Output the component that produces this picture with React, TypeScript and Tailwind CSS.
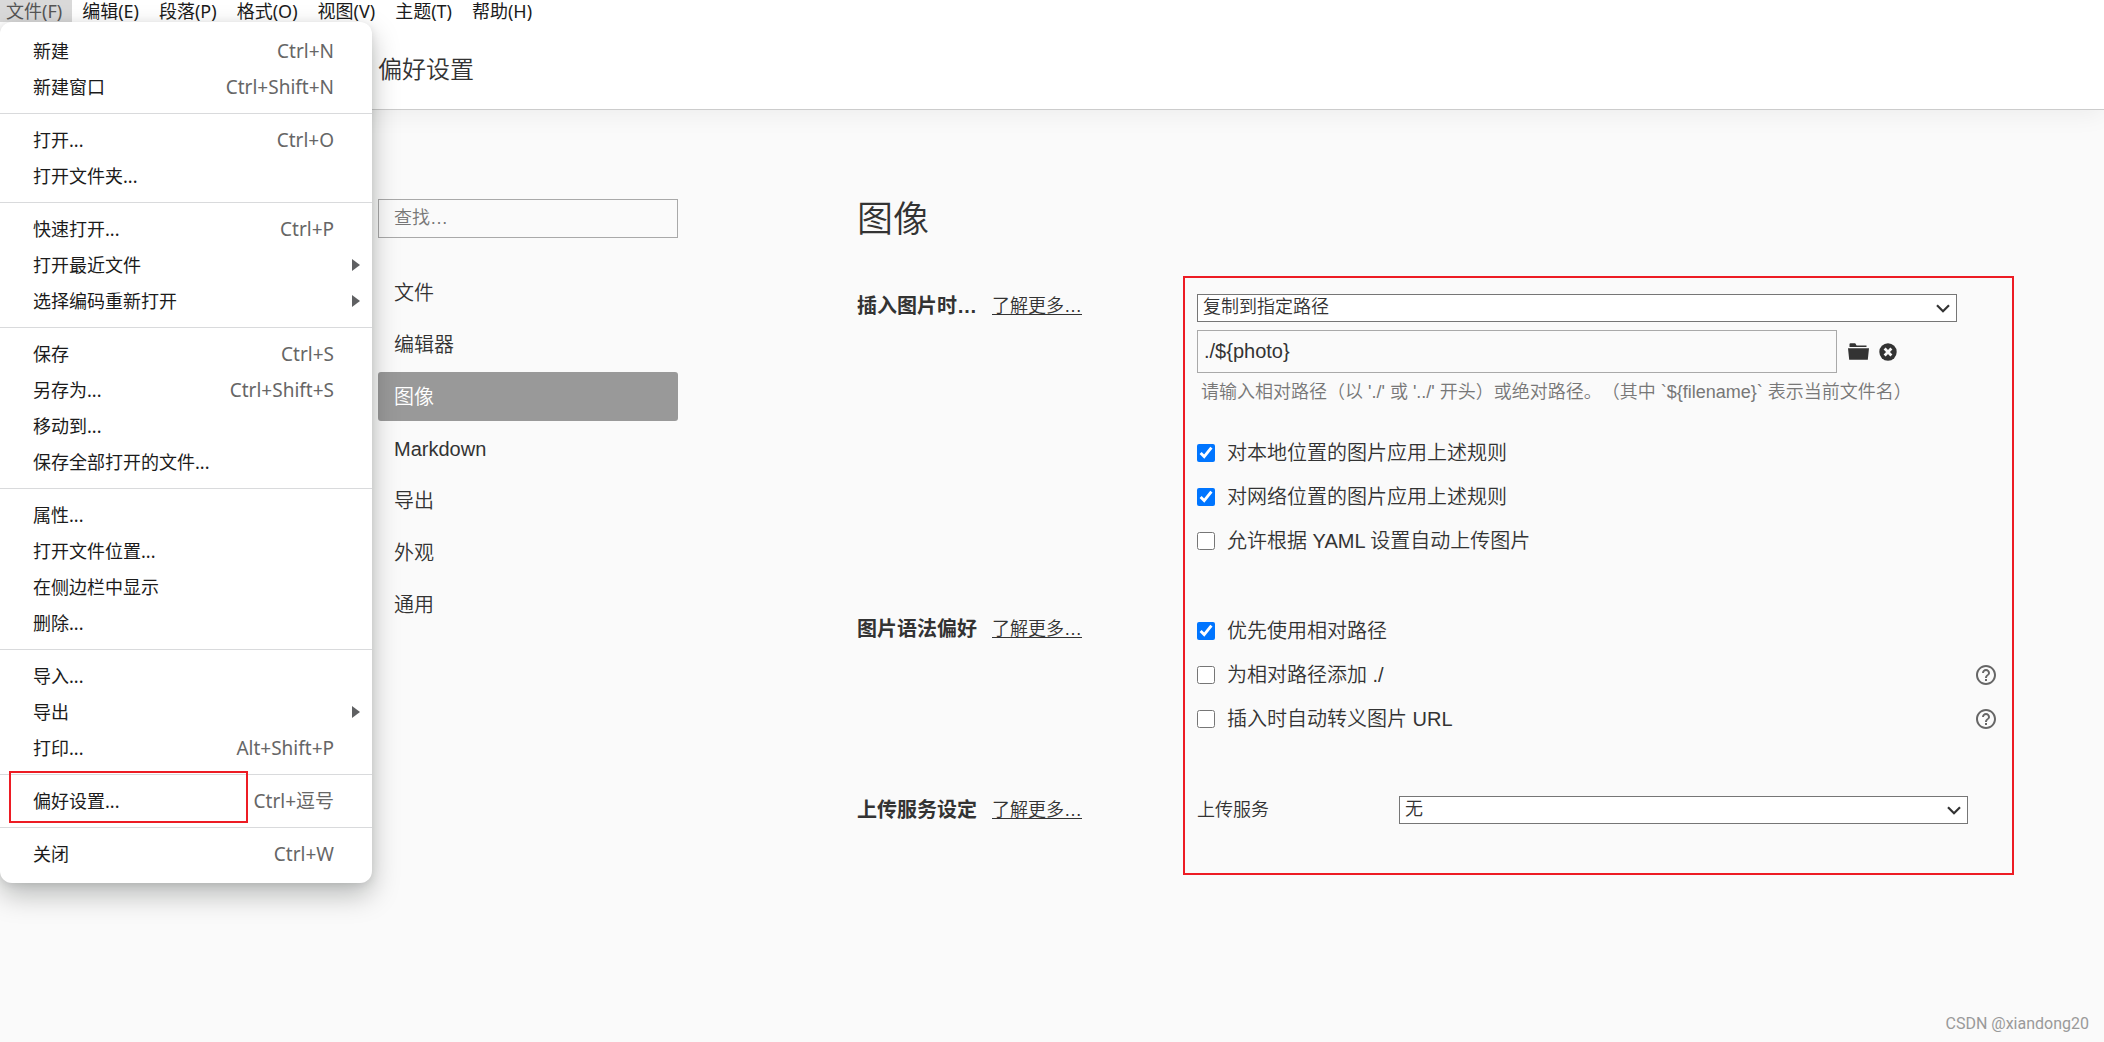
import { useState } from "react";
import type { ReactNode } from "react";
import { MdHelpOutline } from "react-icons/md";

/** ==============================
 *  Types
 *  ============================== */
interface MenuItem {
  label: string;
  shortcut?: string;
  submenu?: boolean;
  marked?: boolean;
}

/** ==============================
 *  Data
 *  ============================== */
const MENU_BAR = [
  "文件(F)",
  "编辑(E)",
  "段落(P)",
  "格式(O)",
  "视图(V)",
  "主题(T)",
  "帮助(H)",
];

const FILE_MENU: MenuItem[][] = [
  [
    { label: "新建", shortcut: "Ctrl+N" },
    { label: "新建窗口", shortcut: "Ctrl+Shift+N" },
  ],
  [{ label: "打开...", shortcut: "Ctrl+O" }, { label: "打开文件夹..." }],
  [
    { label: "快速打开...", shortcut: "Ctrl+P" },
    { label: "打开最近文件", submenu: true },
    { label: "选择编码重新打开", submenu: true },
  ],
  [
    { label: "保存", shortcut: "Ctrl+S" },
    { label: "另存为...", shortcut: "Ctrl+Shift+S" },
    { label: "移动到..." },
    { label: "保存全部打开的文件..." },
  ],
  [
    { label: "属性..." },
    { label: "打开文件位置..." },
    { label: "在侧边栏中显示" },
    { label: "删除..." },
  ],
  [
    { label: "导入..." },
    { label: "导出", submenu: true },
    { label: "打印...", shortcut: "Alt+Shift+P" },
  ],
  [{ label: "偏好设置...", shortcut: "Ctrl+逗号", marked: true }],
  [{ label: "关闭", shortcut: "Ctrl+W" }],
];

const TABS = ["文件", "编辑器", "图像", "Markdown", "导出", "外观", "通用"];

const FileMenu = () => (
  <div className="absolute left-0 top-[22px] z-20 w-[372px] rounded-xl bg-white py-[11px] font-['Noto_Sans','Noto_Sans_CJK_SC',sans-serif] font-normal shadow-[0_12px_28px_rgba(0,10,8,0.26),0_2px_10px_rgba(0,10,8,0.1)]">
    {FILE_MENU.map((group, i) => (
      <ul
        key={i}
        className="border-[#d9dadc] py-2 not-first:border-t first:pt-0 last:pb-0"
      >
        {group.map((item) => (
          <li key={item.label} className="relative">
            <button
              type="button"
              className="flex h-9 w-full items-center justify-between pl-[33px] pr-[38px] text-[18px] text-[#1b1b1b]"
            >
              <span>{item.label}</span>
              {item.shortcut && (
                <span className="text-[19px] text-[#666]">{item.shortcut}</span>
              )}
            </button>
            {item.submenu && (
              <svg
                viewBox="0 0 8 12"
                className="absolute right-3 top-3 h-3 w-2 fill-[#5f6062]"
              >
                <path d="M0 0 8 6 0 12Z" />
              </svg>
            )}
            {item.marked && (
              <span className="pointer-events-none absolute -top-3 left-[9px] h-[52px] w-[239px] border-2 border-[#ed1c24]" />
            )}
          </li>
        ))}
      </ul>
    ))}
  </div>
);

const Chevron = () => (
  <svg
    viewBox="0 0 14 9"
    className="pointer-events-none absolute right-[7px] top-[10px] h-[9px] w-[14px] fill-none stroke-[#333]"
    strokeWidth="2.2"
  >
    <path d="M1 1.2 7 7.2 13 1.2" />
  </svg>
);

const Select = ({
  id,
  value,
  label,
}: {
  id: string;
  value: string;
  label?: string;
}) => (
  <div className="relative">
    <select
      id={id}
      aria-label={label}
      className="block h-7 w-full appearance-none border border-[#767676] bg-white pb-[2px] pl-[5px] text-[18px] leading-6"
    >
      <option>{value}</option>
    </select>
    <Chevron />
  </div>
);

const Check = ({
  label,
  checked,
  help,
}: {
  label: string;
  checked?: boolean;
  help?: boolean;
}) => (
  <div className="flex h-11 items-center justify-between">
    <label className="flex items-center gap-3">
      <input
        type="checkbox"
        defaultChecked={checked}
        className="size-[18px] accent-[#0075ff]"
      />
      {label}
    </label>
    {help && (
      <button type="button" aria-label="帮助" className="-mr-[2px] text-[#666]">
        <MdHelpOutline className="size-6" />
      </button>
    )}
  </div>
);

const Section = ({
  title,
  labelHeight,
  children,
}: {
  title: string;
  labelHeight: string;
  children: ReactNode;
}) => (
  <section className="flex items-start">
    <div className={`flex w-[340px] shrink-0 items-center ${labelHeight}`}>
      <h3 className="w-[135px] font-bold">{title}</h3>
      <a href="#more" className="text-[18px] underline underline-offset-2">
        了解更多…
      </a>
    </div>
    <div className="min-w-0 flex-1">{children}</div>
  </section>
);

const App = () => {
  const [tab, setTab] = useState("图像");

  return (
    <div className="relative flex min-h-screen flex-col overflow-hidden bg-[#fafafa] font-['Liberation_Sans','Noto_Sans_CJK_SC',sans-serif] text-[20px] font-[350] text-[#333]">
      {/* Menu bar */}
      <nav className="relative z-20 -ml-1 flex h-[22px] bg-white font-['Noto_Sans','Noto_Sans_CJK_SC',sans-serif] font-normal">
        {MENU_BAR.map((m, i) => (
          <button
            key={m}
            type="button"
            className={`px-[10px] text-[18px] leading-[22px] ${i === 0 ? "bg-[#d9d9d9] text-[#555]" : "text-[#1b1b1b]"}`}
          >
            {m}
          </button>
        ))}
      </nav>
      <FileMenu />

      {/* Header */}
      <header className="flex h-[88px] items-center border-b border-[#ccc] bg-white pl-[378px] pt-2 shadow-[0_4px_24px_rgba(0,0,0,0.06)]">
        <h1 className="text-[24px]">偏好设置</h1>
      </header>

      <div className="flex flex-1 pl-[378px] pr-[90px] pt-[89px]">
        {/* Sidebar */}
        <aside className="w-[300px] shrink-0">
          <input
            type="search"
            placeholder="查找…"
            aria-label="查找"
            className="block h-[39px] w-full border border-[#a9a9a9] px-[15px] text-[18px] placeholder:text-[#777]"
          />
          <ul className="mt-[30px] flex flex-col gap-[3px]">
            {TABS.map((t) => (
              <li key={t}>
                <button
                  type="button"
                  onClick={() => setTab(t)}
                  className={`h-[49px] w-full rounded-[3px] px-4 text-left ${t === tab ? "bg-[#999] text-white" : ""}`}
                >
                  {t}
                </button>
              </li>
            ))}
          </ul>
        </aside>

        {/* Image settings */}
        <main className="ml-[179px] min-w-0 flex-1">
          <h2 className="pt-[1px] text-[36px] leading-[40px]">图像</h2>

          <div className="relative mt-9 pb-[51px] pr-[18px] pt-[18px]">
            <Section title="插入图片时…" labelHeight="h-6">
              <div className="mr-[39px]">
                <Select
                  id="insert-action"
                  label="插入图片时"
                  value="复制到指定路径"
                />
              </div>
              <div className="mr-[99px] mt-2 flex items-center">
                <input
                  type="text"
                  defaultValue="./${photo}"
                  aria-label="路径"
                  className="h-[43px] min-w-0 flex-1 border border-[#a9a9a9] px-[6px]"
                />
                <button
                  type="button"
                  aria-label="打开文件夹"
                  className="ml-[11px]"
                >
                  <svg
                    viewBox="0 0 21 17"
                    className="h-[17px] w-[21px] fill-[#333]"
                  >
                    <path d="M1.500 1Q1.700 .3 2.400 .3H7.200L8.600 2.400H18.500V4H1.500ZM0 5.300H21L19.800 16.700H1.200Z" />
                  </svg>
                </button>
                <button type="button" aria-label="清除" className="ml-[10px]">
                  <svg viewBox="0 0 18 18" className="size-[18px]">
                    <circle cx="9" cy="9" r="8.700" fill="#333" />
                    <path
                      d="M5.600 5.600 12.400 12.400M12.400 5.600 5.600 12.400"
                      stroke="#fafafa"
                      strokeWidth="2.800"
                    />
                  </svg>
                </button>
              </div>
              <p className="ml-1 mt-1 h-[30px] whitespace-nowrap text-[18px] leading-[30px] text-[#777] [text-spacing-trim:space-all]">
                请输入相对路径（以 './' 或 '../' 开头）或绝对路径。（其中
                `${"{filename}"}` 表示当前文件名）
              </p>
              <div className="mt-6">
                <Check label="对本地位置的图片应用上述规则" checked />
                <Check label="对网络位置的图片应用上述规则" checked />
                <Check label="允许根据 YAML 设置自动上传图片" />
              </div>
            </Section>

            <div className="mt-[46px]">
              <Section title="图片语法偏好" labelHeight="h-10">
                <Check label="优先使用相对路径" checked />
                <Check label="为相对路径添加 ./" help />
                <Check label="插入时自动转义图片 URL" help />
              </Section>
            </div>

            <div className="mt-[55px]">
              <Section title="上传服务设定" labelHeight="h-7">
                <div className="mr-[28px] flex items-center">
                  <label
                    htmlFor="upload-service"
                    className="w-[202px] text-[18px]"
                  >
                    上传服务
                  </label>
                  <div className="flex-1">
                    <Select id="upload-service" value="无" />
                  </div>
                </div>
              </Section>
            </div>

            {/* Highlight frame */}
            <div className="pointer-events-none absolute inset-y-0 left-[326px] right-0 border-2 border-[#ed1c24]" />
          </div>
        </main>
      </div>

      <p className="absolute bottom-2 right-[15px] font-['Roboto',sans-serif] text-[16px] font-normal leading-5 text-[#999]">
        CSDN @xiandong20
      </p>
    </div>
  );
};

export default App;
